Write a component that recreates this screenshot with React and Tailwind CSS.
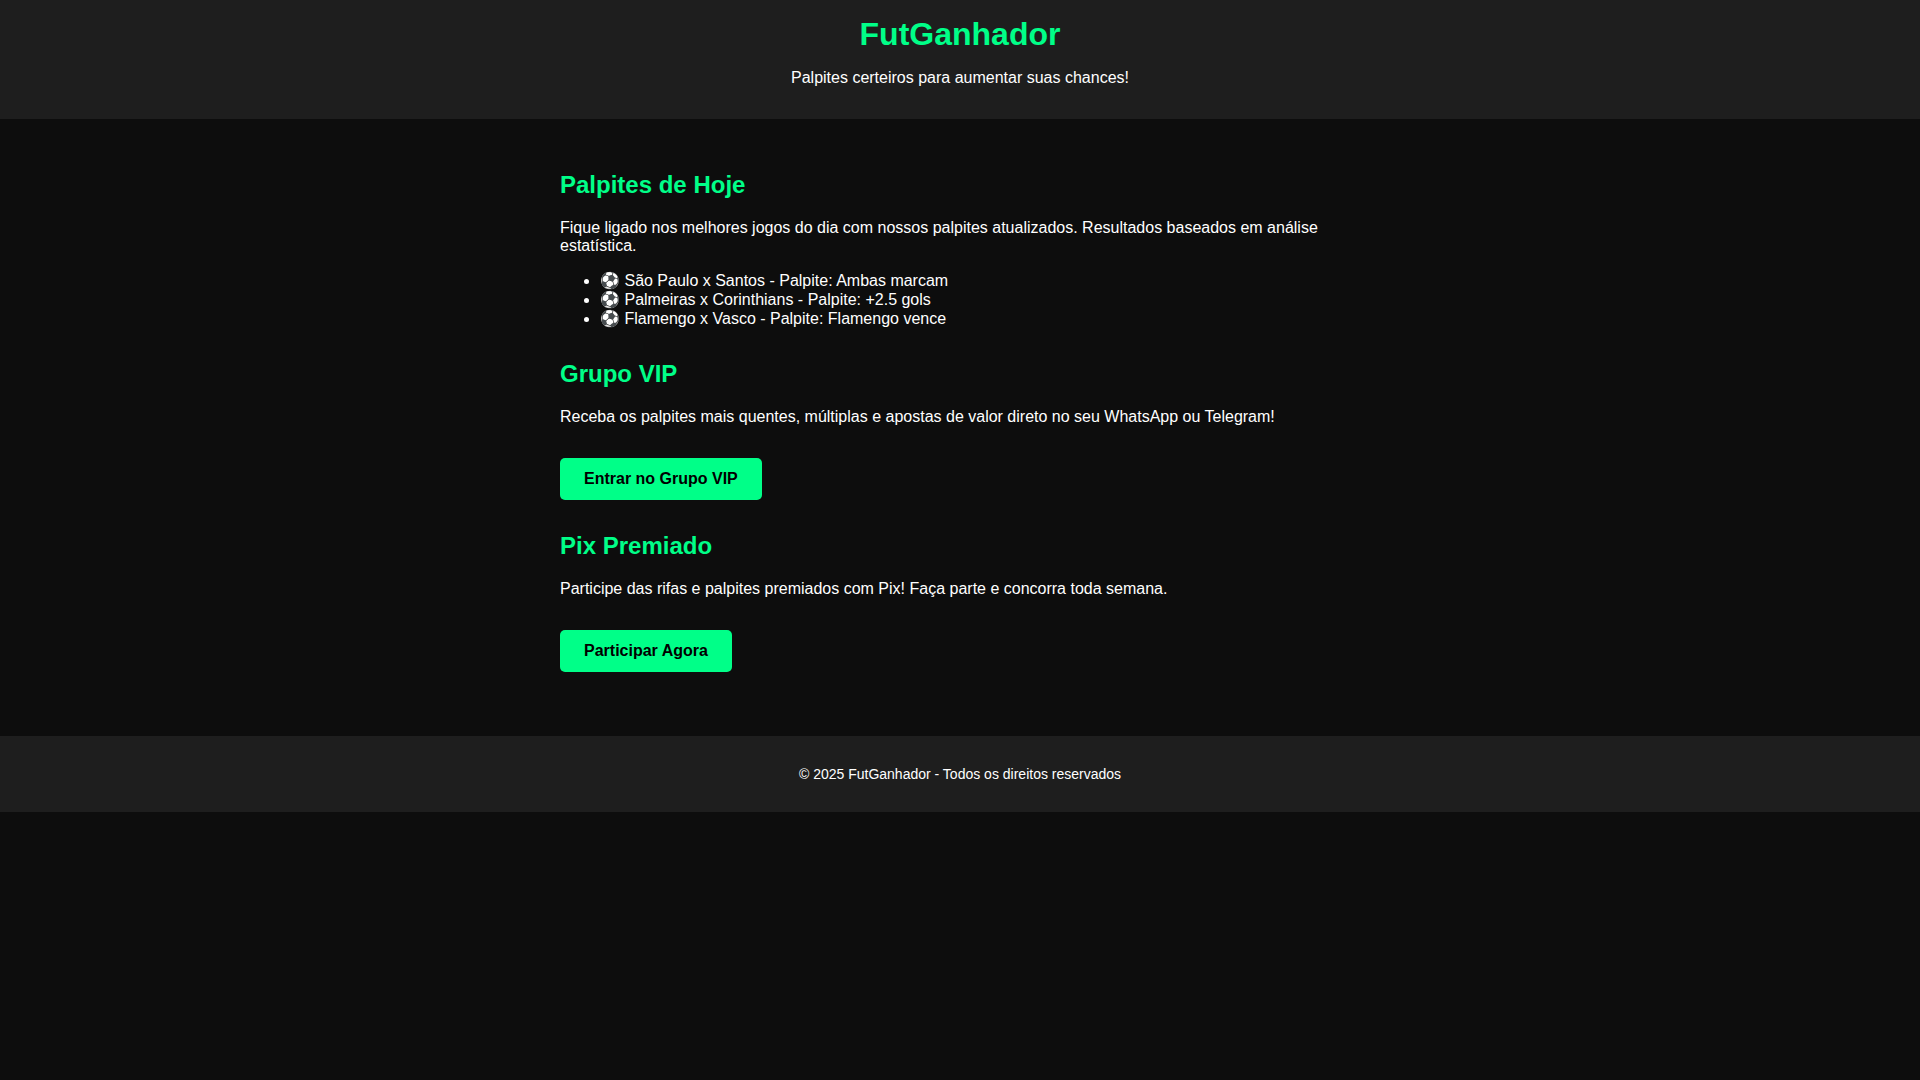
const palpites = [
  "São Paulo x Santos - Palpite: Ambas marcam",
  "Palmeiras x Corinthians - Palpite: +2.5 gols",
  "Flamengo x Vasco - Palpite: Flamengo vence",
];

function Section({ title, children }) {
  return (
    <section>
      <h2 className="mb-5 text-2xl leading-7 font-bold text-[#00ff88]">
        {title}
      </h2>
      {children}
    </section>
  );
}

function ButtonLink({ href, children }) {
  return (
    <a
      href={href}
      className="mt-8 inline-block rounded-[5px] bg-[#00ff88] px-6 py-3 align-top font-bold text-black"
    >
      {children}
    </a>
  );
}

function App() {
  return (
    <div className="min-h-screen bg-[#0d0d0d] font-['Liberation_Sans',Arial,sans-serif] text-base leading-[18px] text-white">
      <header className="bg-[#1e1e1e] p-4 text-center">
        <h1 className="text-[32px] leading-[37px] font-bold text-[#00ff88]">
          FutGanhador
        </h1>
        <p className="my-4">Palpites certeiros para aumentar suas chances!</p>
      </header>

      <main className="mx-auto flex max-w-[864px] flex-col gap-8 px-8 pt-[52px] pb-16">
        <Section title="Palpites de Hoje">
          <p>
            Fique ligado nos melhores jogos do dia com nossos palpites
            atualizados. Resultados baseados em análise estatística.
          </p>
          <ul className="mt-4 list-disc pl-10 leading-[19px]">
            {palpites.map((palpite) => (
              <li key={palpite}>⚽ {palpite}</li>
            ))}
          </ul>
        </Section>

        <Section title="Grupo VIP">
          <p>
            Receba os palpites mais quentes, múltiplas e apostas de valor direto
            no seu WhatsApp ou Telegram!
          </p>
          <ButtonLink href="#vip">Entrar no Grupo VIP</ButtonLink>
        </Section>

        <Section title="Pix Premiado">
          <p>
            Participe das rifas e palpites premiados com Pix! Faça parte e
            concorra toda semana.
          </p>
          <ButtonLink href="#pix">Participar Agora</ButtonLink>
        </Section>
      </main>

      <footer className="bg-[#1e1e1e] px-4 py-[30px] text-center text-sm leading-4">
        <p>© 2025 FutGanhador - Todos os direitos reservados</p>
      </footer>
    </div>
  );
}

export default App;
